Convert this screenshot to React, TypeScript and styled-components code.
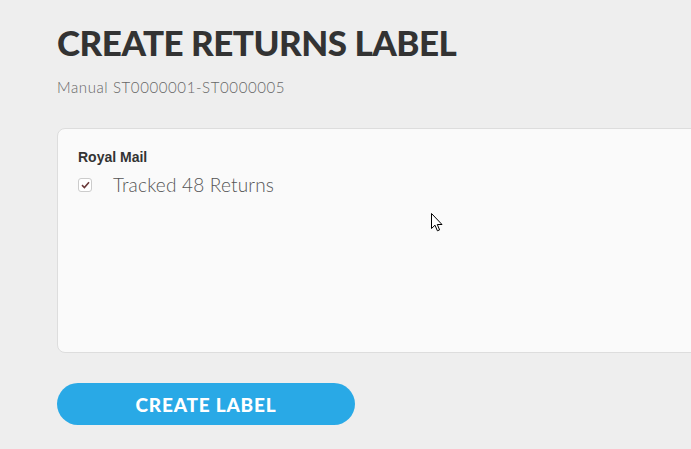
import React from "react";
import styled, { createGlobalStyle } from "styled-components";

const GlobalStyle = createGlobalStyle`
  html, body {
    margin: 0;
    padding: 0;
    background: #eeeeee;
    overflow: hidden;
  }
  body {
    font-family: "Lato", "Liberation Sans", sans-serif;
  }
`;

const Page = styled.div`
  position: relative;
  width: 691px;
  height: 449px;
  padding: 23px 0 0 57px;
  box-sizing: border-box;
  overflow: hidden;
`;

const Title = styled.h1`
  margin: 0;
  font-family: "Lato", sans-serif;
  font-weight: 900;
  font-size: 35px;
  line-height: 38px;
  letter-spacing: -0.5px;
  color: #333333;
`;

const Subtitle = styled.div`
  margin-top: 17px;
  font-family: "Lato", sans-serif;
  font-weight: 300;
  font-size: 15px;
  letter-spacing: 0.6px;
  color: #666666;
`;

const Card = styled.div`
  margin-top: 32px;
  width: 700px;
  height: 225px;
  box-sizing: border-box;
  padding: 20px 20px;
  background: #fafafa;
  border: 1px solid #dddddd;
  border-radius: 8px;
`;

const Carrier = styled.div`
  font-family: "Liberation Sans", Arial, sans-serif;
  font-weight: 700;
  font-size: 14px;
  color: #333333;
`;

const Option = styled.label`
  display: flex;
  align-items: center;
  gap: 21px;
  margin-top: 8px;
`;

const Box = styled.span`
  width: 14px;
  height: 14px;
  box-sizing: border-box;
  border: 1px solid #cccccc;
  border-radius: 3px;
  background: #ffffff;
  display: flex;
  align-items: center;
  justify-content: center;
`;

const OptionText = styled.span`
  font-family: "Lato", sans-serif;
  font-weight: 300;
  font-size: 19px;
  letter-spacing: 0.2px;
  color: #555555;
`;

const Button = styled.button`
  margin-top: 30px;
  width: 298px;
  height: 42px;
  border: none;
  border-radius: 21px;
  background: #29a9e6;
  color: #ffffff;
  font-family: "Lato", sans-serif;
  font-weight: 900;
  font-size: 19px;
  letter-spacing: 0.8px;
  display: flex;
  align-items: center;
  justify-content: center;
`;

const Cursor = styled.svg`
  position: absolute;
  left: 431px;
  top: 213px;
`;

export default function App() {
  return (
    <>
      <GlobalStyle />
      <Page>
        <Title>CREATE RETURNS LABEL</Title>
        <Subtitle>Manual ST0000001-ST0000005</Subtitle>
        <Card>
          <Carrier>Royal Mail</Carrier>
          <Option>
            <Box>
              <svg width="9" height="8" viewBox="0 0 9 8">
                <path d="M1 4.2 L3.4 6.5 L8 1.2" fill="none" stroke="#6b3a3a" strokeWidth="1.6" />
              </svg>
            </Box>
            <OptionText>Tracked 48 Returns</OptionText>
          </Option>
        </Card>
        <Button>CREATE LABEL</Button>
        <Cursor width="12" height="19" viewBox="0 0 12 19">
          <path
            d="M0.5 0.5 L0.5 15.5 L4 12.2 L6.4 17.8 L8.6 16.9 L6.3 11.5 L11 11.5 Z"
            fill="#ffffff"
            stroke="#000000"
            strokeWidth="1"
          />
        </Cursor>
      </Page>
    </>
  );
}
